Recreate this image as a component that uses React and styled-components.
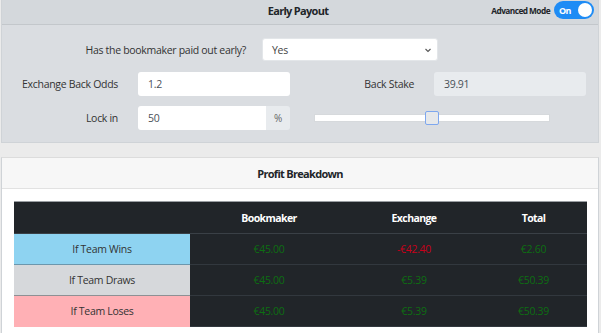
import React from "react";
import styled, { createGlobalStyle } from "styled-components";

const GlobalStyle = createGlobalStyle`
  html, body {
    margin: 0;
    padding: 0;
    background: #ebebeb;
  }
  body {
    font-family: "Open Sans", "Noto Sans", sans-serif;
    font-size: 10.5px;
    letter-spacing: -0.3px;
    color: #333;
  }
  * {
    box-sizing: border-box;
  }
`;

const Page = styled.div`
  width: 601px;
  height: 333px;
  overflow: hidden;
  padding: 0 2px 0 1px;
  display: flex;
  flex-direction: column;
  gap: 14px;
`;

const Card = styled.section`
  border: 1px solid #cfd3d7;
  border-top: ${({ $flat }) => ($flat ? "none" : "1px solid #dcdcdc")};
  background: ${({ $bg }) => $bg};
  flex-shrink: 0;
`;

const TopHeader = styled.header`
  height: 25px;
  background: #d4d8dc;
  border-bottom: 1px solid #c3c7cb;
  display: grid;
  grid-template-columns: 1fr auto 1fr;
  align-items: center;
  padding: 0 4px 3px 0;
`;

const Title = styled.h2`
  margin: 0;
  font-size: 11px;
  font-weight: 700;
  letter-spacing: -0.7px;
  color: #212529;
  text-align: center;
`;

const ModeBox = styled.div`
  justify-self: end;
  align-self: start;
  padding-top: 1px;
  display: flex;
  align-items: center;
  gap: 4px;
  font-size: 8.3px;
  font-weight: 700;
  letter-spacing: -0.55px;
  color: #212529;
`;

const Toggle = styled.span`
  width: 40px;
  height: 18px;
  border-radius: 9px;
  background: #1e8cf5;
  display: flex;
  align-items: center;
  justify-content: space-between;
  padding: 0 2px 0 5px;
  color: #fff;
  font-size: 9px;
  font-weight: 700;
`;

const Knob = styled.span`
  width: 14px;
  height: 14px;
  border-radius: 50%;
  background: #fff;
`;

const FormBody = styled.div`
  background: #dadde1;
  padding: 13px 0 13px;
  display: flex;
  flex-direction: column;
  gap: 11px;
`;

const Row = styled.div`
  display: grid;
  grid-template-columns: ${({ $cols }) => $cols};
  align-items: center;
  height: 23px;
`;

const Label = styled.label`
  text-align: right;
  padding-right: ${({ $pad }) => $pad || 20}px;
  color: #333;
`;

const Select = styled.div`
  height: 23px;
  background: #fff;
  border: 1px solid #e3e6e9;
  border-radius: 3px;
  display: flex;
  align-items: center;
  justify-content: space-between;
  padding: 0 5px 0 9px;
  color: #444;
`;

const Field = styled.div`
  height: 24px;
  background: ${({ $ro }) => ($ro ? "#e8ebee" : "#fff")};
  border-radius: 3px;
  display: flex;
  align-items: center;
  padding: 0 10px;
  color: #495057;
`;

const Group = styled.div`
  display: flex;
  height: 24px;
`;

const GroupField = styled(Field)`
  flex: 1;
  border-radius: 3px 0 0 3px;
`;

const Addon = styled.span`
  width: 24px;
  background: #e8ebee;
  border-radius: 0 3px 3px 0;
  display: flex;
  align-items: center;
  justify-content: center;
  color: #666;
  font-size: 10px;
`;

const SliderCell = styled.div`
  grid-column: span 2;
  padding: 0 36px 0 24px;
  display: flex;
  align-items: center;
`;

const Track = styled.div`
  position: relative;
  flex: 1;
  height: 8px;
  background: #fff;
  border: 1px solid #d6d9dc;
`;

const Thumb = styled.span`
  position: absolute;
  top: -4px;
  width: 14px;
  height: 14px;
  margin-left: -7px;
  background: #e6e8ea;
  border: 1px solid #7ea7ee;
  border-radius: 2px;
`;

const BreakHeader = styled.header`
  height: 31px;
  background: #f7f7f7;
  border-bottom: 1px solid #e2e2e2;
  display: flex;
  align-items: center;
  justify-content: center;
`;

const BreakBody = styled.div`
  background: #fff;
  padding: 12px 11px 12px 12px;
`;

const Table = styled.table`
  width: 573px;
  border-collapse: collapse;
  table-layout: fixed;
  border-top: 1px solid #9a9ea2;
`;

const Th = styled.th`
  height: 32px;
  padding: 0;
  background: #212529;
  color: #fff;
  font-weight: 700;
  font-size: 10.5px;
  letter-spacing: -0.6px;
  text-align: center;
  border-bottom: 1px solid #3a4046;
`;

const RowHead = styled.td`
  height: 31px;
  padding: 0;
  background: ${({ $bg }) => $bg};
  border-bottom: 1px solid ${({ $line }) => $line};
  text-align: center;
  color: #333;
`;

const Value = styled.td`
  padding: 0;
  background: #212529;
  border-bottom: 1px solid #32383e;
  text-align: center;
  color: ${({ $neg }) => ($neg ? "#c8001a" : "#0d6e12")};
`;

const rows = [
  { name: "If Team Wins", bg: "#8ed3f1", line: "#6c97ad", vals: ["€45.00", "-€42.40", "€2.60"] },
  { name: "If Team Draws", bg: "#d6d8db", line: "#8e9094", vals: ["€45.00", "€5.39", "€50.39"] },
  { name: "If Team Loses", bg: "#ffb0b5", line: "#ffb0b5", vals: ["€45.00", "€5.39", "€50.39"] },
];

function Chevron() {
  return (
    <svg width="8" height="8" viewBox="0 0 8 8">
      <path d="M1.5 3 L4 5.5 L6.5 3" fill="none" stroke="#555" strokeWidth="1.1" />
    </svg>
  );
}

export default function App() {
  return (
    <>
      <GlobalStyle />
      <Page>
        <Card $flat $bg="#dadde1">
          <TopHeader>
            <span />
            <Title>Early Payout</Title>
            <ModeBox>
              Advanced Mode
              <Toggle>
                On
                <Knob />
              </Toggle>
            </ModeBox>
          </TopHeader>
          <FormBody>
            <Row $cols="260px 176px">
              <Label $pad={16}>Has the bookmaker paid out early?</Label>
              <Select>
                Yes
                <Chevron />
              </Select>
            </Row>
            <Row $cols="136px 152px 144px 152px">
              <Label>Exchange Back Odds</Label>
              <Field>1.2</Field>
              <Label>Back Stake</Label>
              <Field $ro>39.91</Field>
            </Row>
            <Row $cols="136px 152px 144px 152px">
              <Label>Lock in</Label>
              <Group>
                <GroupField>50</GroupField>
                <Addon>%</Addon>
              </Group>
              <SliderCell>
                <Track>
                  <Thumb style={{ left: "50%" }} />
                </Track>
              </SliderCell>
            </Row>
          </FormBody>
        </Card>
        <Card $bg="#fff">
          <BreakHeader>
            <Title>Profit Breakdown</Title>
          </BreakHeader>
          <BreakBody>
            <Table>
              <colgroup>
                <col style={{ width: 176 }} />
                <col style={{ width: 158 }} />
                <col style={{ width: 132 }} />
                <col style={{ width: 107 }} />
              </colgroup>
              <thead>
                <tr>
                  <Th />
                  <Th>Bookmaker</Th>
                  <Th>Exchange</Th>
                  <Th>Total</Th>
                </tr>
              </thead>
              <tbody>
                {rows.map((r) => (
                  <tr key={r.name}>
                    <RowHead $bg={r.bg} $line={r.line}>
                      {r.name}
                    </RowHead>
                    {r.vals.map((v, i) => (
                      <Value key={i} $neg={v.startsWith("-")}>
                        {v}
                      </Value>
                    ))}
                  </tr>
                ))}
              </tbody>
            </Table>
          </BreakBody>
        </Card>
      </Page>
    </>
  );
}
